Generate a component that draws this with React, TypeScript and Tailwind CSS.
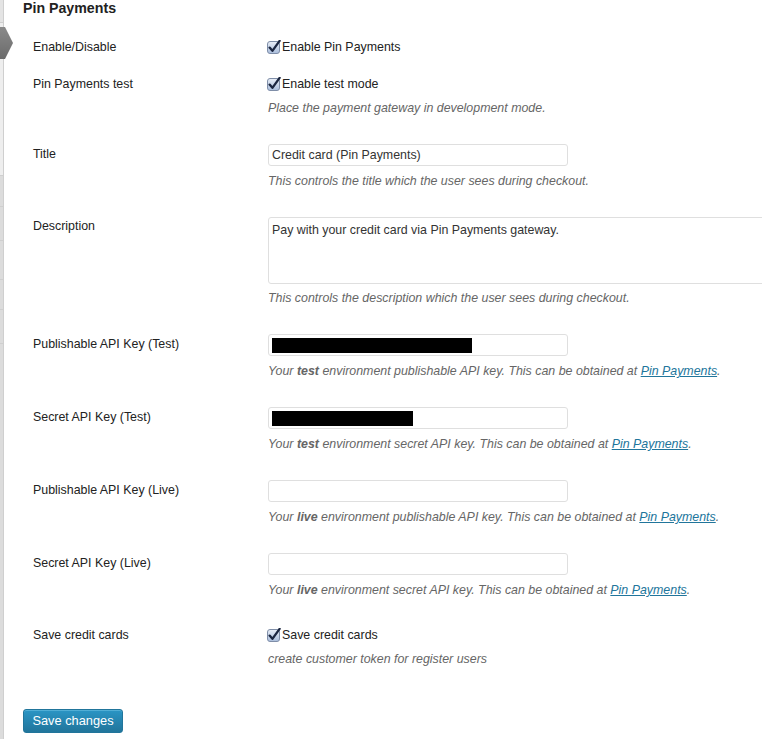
import type { ReactNode } from 'react'

function Check() {
  return (
    <svg width="14" height="14" viewBox="0 0 14 14" className="shrink-0">
      <defs>
        <linearGradient id="cb" x1="0" y1="0" x2="0" y2="1">
          <stop offset="0" stopColor="#e9eef7" />
          <stop offset="1" stopColor="#a9bddb" />
        </linearGradient>
      </defs>
      <rect x="0.5" y="1.5" width="12" height="12" rx="2.5" fill="url(#cb)" stroke="#7f8ea8" />
      <path d="M2.6 7.6 L5.4 10.8 L12.6 0.8" fill="none" stroke="#1b2640" strokeWidth="2.3" strokeLinecap="round" strokeLinejoin="round" />
    </svg>
  )
}

function Row({ label, top, pt = 'pt-0', children }: { label: string; top: string; pt?: string; children: ReactNode }) {
  return (
    <div className={`flex ${top}`}>
      <div className={`w-[245px] shrink-0 pl-[10px] leading-[18px] text-[#222] ${pt}`}>{label}</div>
      <div className="flex flex-col">{children}</div>
    </div>
  )
}

function Desc({ children, gap = 'mt-[6px]' }: { children: ReactNode; gap?: string }) {
  return <p className={`${gap} italic leading-[18px] text-[#666] whitespace-nowrap`}>{children}</p>
}

function Link() {
  return <span className="text-[#21759b] underline">Pin Payments</span>
}

function Input({ value, redact }: { value?: string; redact?: string }) {
  return (
    <div className="w-[300px] h-[22px] rounded-[3px] border border-[#dfdfdf] bg-white flex items-center pl-[3px] text-[#333] leading-[18px]">
      {value}
      {redact && <div className={`h-[15px] bg-black ${redact}`} />}
    </div>
  )
}

function Box({ text }: { text: string }) {
  return (
    <div className="flex items-center gap-[1px] -ml-[1px] leading-[18px] text-[#222]">
      <Check />
      <span>{text}</span>
    </div>
  )
}

export default function App() {
  return (
    <div className="relative flex w-[762px] h-[739px] overflow-hidden bg-white font-['Liberation_Sans',Arial,sans-serif] text-[12.4px]">
      {/* admin menu edge */}
      <div className="w-[4px] shrink-0 flex flex-col bg-[#dcdcdc] border-r border-[#cfcfcf]">
        <div className="h-[23px] bg-[#e4e4e4] border-b border-[#cfcfcf]" />
        <div className="h-[153px] bg-[#eeeeee] border-b border-[#cfcfcf]" />
        <div className="h-[31px] border-b border-[#cfcfcf]" />
        <div className="h-[34px] border-b border-[#cfcfcf]" />
        <div className="h-[39px] border-b border-[#cfcfcf]" />
        <div className="h-[30px] border-b border-[#cfcfcf]" />
        <div className="h-[34px] border-b border-[#cfcfcf]" />
      </div>
      <svg width="14" height="32" viewBox="0 0 14 32" className="absolute left-0 top-[27px]">
        <defs>
          <linearGradient id="ar" x1="0" y1="0" x2="0" y2="1">
            <stop offset="0" stopColor="#8a8a8a" />
            <stop offset="1" stopColor="#6b6b6b" />
          </linearGradient>
        </defs>
        <polygon points="0,0 5,0 13,16 5,32 0,32" fill="url(#ar)" />
      </svg>

      <div className="flex flex-col pl-[19px]">
        <h3 className="-mt-[1px] text-[14.2px] font-bold leading-[18px] text-[#222]">Pin Payments</h3>

        <Row label="Enable/Disable" top="mt-[21px]">
          <Box text="Enable Pin Payments" />
        </Row>

        <Row label="Pin Payments test" top="mt-[19px]">
          <Box text="Enable test mode" />
          <Desc>Place the payment gateway in development mode.</Desc>
        </Row>

        <Row label="Title" top="mt-[27px]" pt="pt-[1px]">
          <Input value="Credit card (Pin Payments)" />
          <Desc>This controls the title which the user sees during checkout.</Desc>
        </Row>

        <Row label="Description" top="mt-[27px]">
          <div className="w-[520px] h-[67px] rounded-[3px] border border-[#dfdfdf] bg-white pl-[3px] pt-[3px] leading-[18px] text-[#333]">
            Pay with your credit card via Pin Payments gateway.
          </div>
          <Desc gap="mt-[5px]">This controls the description which the user sees during checkout.</Desc>
        </Row>

        <Row label="Publishable API Key (Test)" top="mt-[27px]" pt="pt-[1px]">
          <Input redact="w-[200px]" />
          <Desc>
            Your <b>test</b> environment publishable API key. This can be obtained at <Link />.
          </Desc>
        </Row>

        <Row label="Secret API Key (Test)" top="mt-[27px]" pt="pt-[1px]">
          <Input redact="w-[141px]" />
          <Desc>
            Your <b>test</b> environment secret API key. This can be obtained at <Link />.
          </Desc>
        </Row>

        <Row label="Publishable API Key (Live)" top="mt-[27px]" pt="pt-[1px]">
          <Input />
          <Desc>
            Your <b>live</b> environment publishable API key. This can be obtained at <Link />.
          </Desc>
        </Row>

        <Row label="Secret API Key (Live)" top="mt-[27px]" pt="pt-[1px]">
          <Input />
          <Desc>
            Your <b>live</b> environment secret API key. This can be obtained at <Link />.
          </Desc>
        </Row>

        <Row label="Save credit cards" top="mt-[27px]">
          <Box text="Save credit cards" />
          <Desc gap="mt-[6px]">create customer token for register users</Desc>
        </Row>

        <div className="mt-[41px]">
          <button className="w-[100px] h-[24px] rounded-[3px] border border-[#21759b] bg-gradient-to-b from-[#2a95c5] to-[#21759b] text-white text-[12.8px] leading-[18px] shadow-[inset_0_1px_0_rgba(120,200,230,0.5)]">
            Save changes
          </button>
        </div>
      </div>
    </div>
  )
}
